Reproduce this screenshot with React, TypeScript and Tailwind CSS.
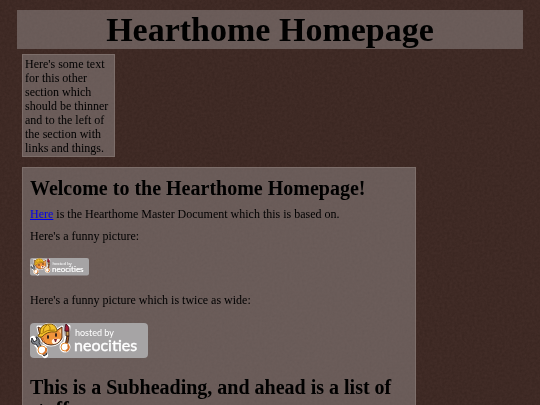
import React from 'react';

const NeocitiesButton: React.FC<{ className: string }> = ({ className }) => (
    <svg className={className} viewBox="0 0 118 36" role="img" aria-label="hosted by neocities">
        <rect width="118" height="35" rx="4" fill="#a6a4a5" />
        {/* white sticker outline */}
        <g stroke="#fff" strokeWidth="3" strokeLinejoin="round" strokeLinecap="round" fill="#fff">
            <path d="M10 13 8 4 13 4Q18-1 25 4L27 7 32 4 32 15Q29 22 21 22Q13 22 10 13Z" />
            <path d="M3 16 6 20 10 25 15 32" strokeWidth="6" />
            <path d="M35 24 37 13 38 4" strokeWidth="5" />
            <circle cx="12" cy="27" r="4" />
            <circle cx="35" cy="24" r="4" />
        </g>
        {/* wrench */}
        <path d="M2 15C0 19 3 22 6 21L14 33 17 31 9 20C10 17 8 14 6 14L7 17 4 19Z" fill="#7f858d" stroke="#28282c" strokeWidth="1" strokeLinejoin="round" />
        {/* paint brush */}
        <path d="M35 23 37 13 39 13 37 25Z" fill="#a75d27" stroke="#3a2117" strokeWidth="1" />
        <path d="M36 13 36 8 39 8 39 13Z" fill="#c99a55" stroke="#3a2117" strokeWidth="1" />
        <path d="M35 8Q35 4 36 1Q40 4 39 8Z" fill="#a51c36" stroke="#4a1420" strokeWidth="1" />
        {/* head */}
        <path d="M10 13 8 4 14 7 26 8 32 4 32 15Q29 22 21 22Q13 22 10 13Z" fill="#f0933b" stroke="#4b2817" strokeWidth="1" strokeLinejoin="round" />
        <path d="M29 8 31 6 31 11Z" fill="#f7c58d" />
        <path d="M22 17Q24 15 27 16Q30 15 30 17Q28 21 23 21Q21 19 22 17Z" fill="#fff3e3" />
        <path d="M11 16 14 16M12 19 15 18" stroke="#b9602a" strokeWidth="1" />
        {/* hard hat */}
        <path d="M10 11Q9 2 18 1Q25 0 27 7Q28 9 25 9Q17 8 12 14Q8 15 8 12Z" fill="#f2c029" stroke="#79530e" strokeWidth="1" strokeLinejoin="round" />
        <path d="M13 9Q13 4 17 2M20 7Q21 3 18 2M11 11Q17 6 25 7" fill="none" stroke="#a9770e" strokeWidth="1" />
        <ellipse cx="18" cy="14" rx="1" ry="2" fill="#25191a" />
        <ellipse cx="26" cy="12" rx="1" ry="2" fill="#25191a" />
        <path d="M24 16 27 16 26 19 25 19Z" fill="#7c1c27" />
        {/* paws */}
        <circle cx="12" cy="27" r="4" fill="#fff" stroke="#e58a31" strokeWidth="1" />
        <circle cx="35" cy="24" r="4" fill="#fff" stroke="#e58a31" strokeWidth="1" />
        <path d="M13 31Q17 29 16 25M36 28Q40 26 38 22" fill="none" stroke="#d9742a" strokeWidth="2" />
        <g fill="#fff" fontFamily="Lato, sans-serif">
            <text x="45" y="13" fontSize="9">hosted by</text>
            <text x="44" y="28" fontSize="16" stroke="#fff" strokeWidth="0.4">neocities</text>
        </g>
    </svg>
);

const LeatherTexture: React.FC = () => (
    <svg className="fixed inset-0 -z-10 h-full w-full" aria-hidden="true">
        <filter id="leather" x="0" y="0" width="100%" height="100%" colorInterpolationFilters="sRGB">
            <feTurbulence type="fractalNoise" baseFrequency="0.4" numOctaves="3" seed="4" />
            <feColorMatrix values="0.05 0 0 0 0.22  0.04 0 0 0 0.143  0.04 0 0 0 0.123  0 0 0 0 1" />
        </filter>
        <rect width="100%" height="100%" filter="url(#leather)" />
    </svg>
);

export default function App() {
    return (
        <div className="h-screen overflow-hidden px-[17px] pt-[10px] font-['Liberation_Serif',serif] text-[12px] leading-[14px] text-black">
            <LeatherTexture />
            <header className="bg-[#a09a9a]/45 text-center">
                <h1 className="text-[34px] leading-[39px] font-bold">Hearthome Homepage</h1>
            </header>
            <div className="px-[5px] pt-[5px]">
                <aside className="w-3/16 border border-[#8b7b77]/60 bg-[#a09a9a]/45 px-[2px] pt-[2px] pb-px">
                    Here's some text for this other section which should be thinner and to the left of the section with links and things.
                </aside>
                <main className="mt-[10px] w-[79.5%] border border-[#8b7b77]/60 bg-[#a09a9a]/45 px-[7px] pt-[9px]">
                    <h2 className="text-[20px] leading-[22px] font-bold">Welcome to the Hearthome Homepage!</h2>
                    <p className="mt-[8px]">
                        <a href="#master-document" className="text-[#0000ee] underline">Here</a> is the Hearthome Master Document which this is based on.
                    </p>
                    <p className="mt-[8px]">Here's a funny picture:</p>
                    <NeocitiesButton className="mt-[15px] h-[18px] w-[59px]" />
                    <p className="mt-[17px]">Here's a funny picture which is twice as wide:</p>
                    <NeocitiesButton className="mt-[16px] h-[36px] w-[118px]" />
                    <h2 className="mt-[17px] text-[20px] leading-[22px] font-bold">This is a Subheading, and ahead is a list of stuff</h2>
                </main>
            </div>
        </div>
    );
}
